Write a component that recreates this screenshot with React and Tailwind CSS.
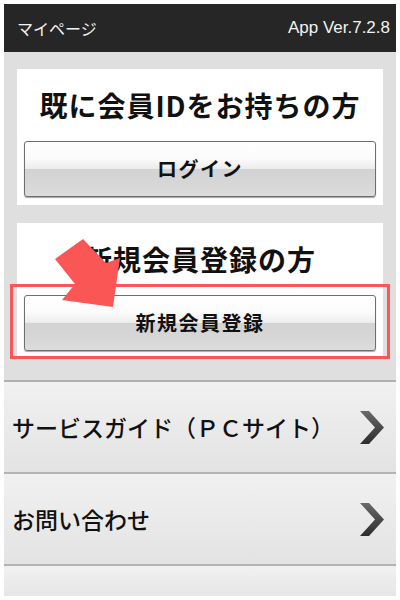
import React from "react";

const jp = { fontFamily: '"Noto Sans CJK JP", "Noto Sans", sans-serif' };

function GlossButton({ label }) {
  return (
    <button
      type="button"
      className="w-full h-[56px] rounded-[3px] border border-[#6e6e6e] shadow-[0_1px_1px_rgba(0,0,0,0.35)] bg-[linear-gradient(to_bottom,#ffffff_0%,#fbfbfb_30%,#ededed_49%,#d3d3d3_50%,#d6d6d6_75%,#dcdcdc_100%)] text-[20px] font-bold text-[#111] tracking-[1.5px]"
      style={jp}
    >
      {label}
    </button>
  );
}

function Chevron() {
  return (
    <svg width="26" height="33" viewBox="0 0 26 33">
      <defs>
        <linearGradient id="chev" x1="0" y1="0" x2="0" y2="1">
          <stop offset="0" stopColor="#6a6a6a" />
          <stop offset="0.5" stopColor="#4a4a4a" />
          <stop offset="1" stopColor="#2e2e2e" />
        </linearGradient>
      </defs>
      <polygon points="1,0 10,0 25,16.5 10,33 1,33 16,16.5" fill="url(#chev)" />
    </svg>
  );
}

function ListRow({ label }) {
  return (
    <div className="h-[92px] flex items-center justify-between pl-[8px] pr-[11px] border-b-2 border-[#b4b4b4] bg-[linear-gradient(to_bottom,#f1f1f1,#e3e3e3)]">
      <span className="text-[23px] font-medium text-[#111]" style={jp}>{label}</span>
      <Chevron />
    </div>
  );
}

export default function App() {
  return (
    <div className="relative w-[400px] h-[600px] bg-white p-[4px] overflow-hidden">
      <div className="h-full flex flex-col bg-[#e9e9e9]">
        <div className="h-[48px] shrink-0 flex items-center justify-between pl-[13px] pr-[6px] bg-[#262626] text-[#f2f2f2]">
          <span className="text-[16px]" style={jp}>マイページ</span>
          <span className="text-[17px]" style={{ fontFamily: '"Liberation Sans", Arial, sans-serif' }}>App Ver.7.2.8</span>
        </div>

        <div className="flex flex-col gap-[18px] px-[13px] pt-[17px] pb-[21px] bg-[#dfdfdf] border-b-2 border-[#b0b0b0]">
          <div className="bg-white px-[7px] pt-[15px] pb-[8px] flex flex-col gap-[15px]">
            <h1 className="text-center text-[28px] leading-[42px] font-bold tracking-[1px] text-[#111]" style={jp}>
              既に会員IDをお持ちの方
            </h1>
            <GlossButton label="ログイン" />
          </div>
          <div className="bg-white px-[7px] pt-[15px] pb-[8px] flex flex-col gap-[15px]">
            <h1 className="text-center text-[28px] leading-[42px] font-bold tracking-[1px] text-[#111]" style={jp}>
              新規会員登録の方
            </h1>
            <GlossButton label="新規会員登録" />
          </div>
        </div>

        <ListRow label="サービスガイド（ＰＣサイト）" />
        <ListRow label="お問い合わせ" />
        <div className="flex-1 bg-[linear-gradient(to_bottom,#f1f1f1,#e6e6e6)]" />
      </div>

      {/* highlight box and arrow drawn over the register card */}
      <div className="absolute left-[10px] top-[284px] w-[380px] h-[75px] border-[3px] border-[#fb5656] pointer-events-none" />
      <svg className="absolute inset-0 pointer-events-none" width="400" height="600" viewBox="0 0 400 600">
        <polygon points="55,259 75,284 62,300 113,307 120,258 106,263 83,239" fill="#fb5656" />
      </svg>
    </div>
  );
}
